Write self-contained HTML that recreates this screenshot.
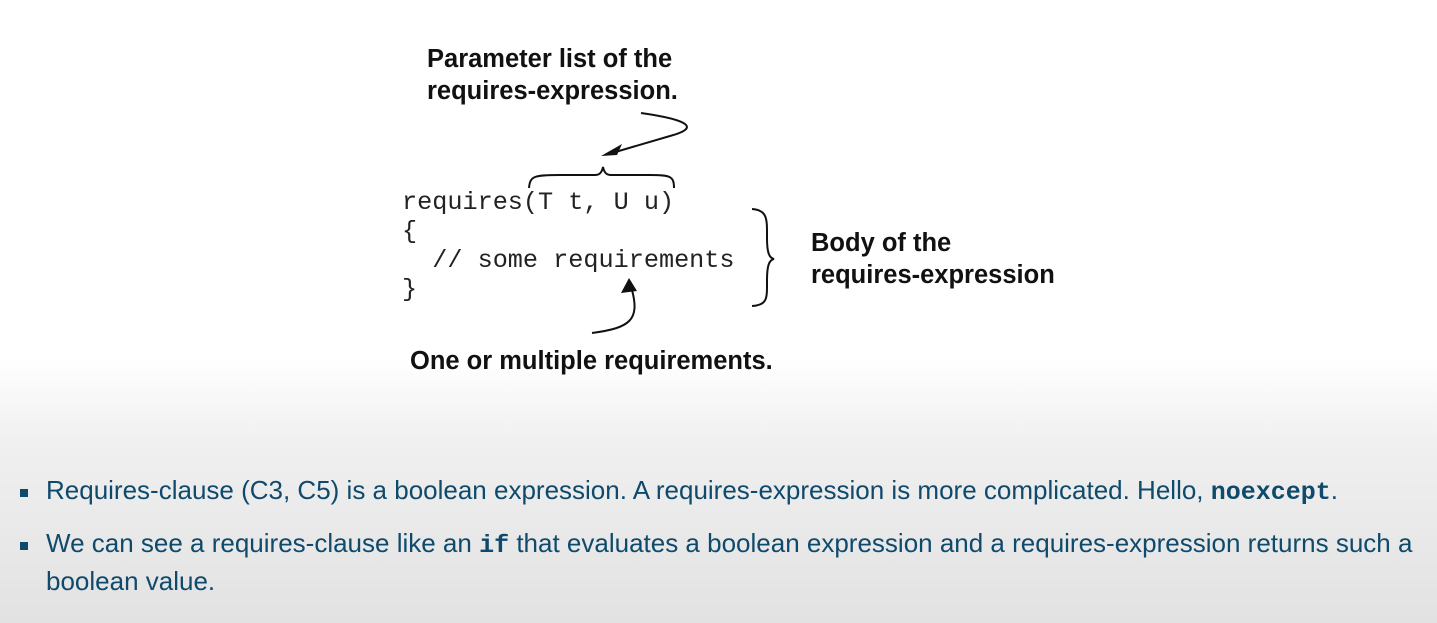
<!DOCTYPE html>
<html><head><meta charset="utf-8"><style>
html,body{margin:0;padding:0}
body{width:1437px;height:623px;position:relative;overflow:hidden;
background:linear-gradient(to bottom,#fff 0,#fff 360px,#f0f0f0 440px,#e2e2e2 623px);font-family:"Liberation Sans",sans-serif}
.a{position:absolute;white-space:nowrap}
.lbl{font-weight:bold;font-size:25.5px;color:#111;line-height:32px}
.code{font-family:"Liberation Mono",monospace;font-size:25.2px;color:#222;line-height:29px}
.b{font-size:26px;color:#0f4a6c;line-height:38px}
.b code{font-family:"Liberation Mono",monospace;font-weight:bold;font-size:25px}
.sq{position:absolute;width:8px;height:8px;background:#0f4a6c}
</style></head><body>
<div class="a lbl" style="left:427px;top:43px">Parameter list of the<br>requires-expression.</div>
<div class="a code" style="left:402px;top:188px">requires(T t, U u)<br>{<br>&nbsp;&nbsp;// some requirements<br>}</div>
<div class="a lbl" style="left:811px;top:227px">Body of the<br>requires-expression</div>
<div class="a lbl" style="left:410px;top:345px">One or multiple requirements.</div>
<svg class="a" style="left:0;top:0" width="1437" height="400">
<g fill="none" stroke="#111" stroke-width="2">
<path d="M641 113 C690 120 700 128 670 136 L612 153"/>
<path d="M529 188 C530 176 534 175 560 175 L595 175 C600 175 602 172 603 167 C604 172 606 175 611 175 L650 175 C670 175 674 176 674 188"/>
<path d="M752 209 C768 210 767 220 767 238 C767 252 769 258 774 259 C769 260 767 266 767 280 C767 298 768 305 752 306"/>
<path d="M592 333 C630 328 640 320 632 290"/>
</g>
<path d="M601 156 L622 144 L617 155 Z" fill="#111"/>
<path d="M629 278 L621 293 L637 291 Z" fill="#111"/>
</svg>
<div class="sq" style="left:20px;top:489px"></div>
<div class="sq" style="left:20px;top:542px"></div>
<div class="a b" style="left:46px;top:471px">Requires-clause (C3, C5) is a boolean expression. A requires-expression is more complicated. Hello, <code>noexcept</code>.</div>
<div class="a b" style="left:46px;top:524px">We can see a requires-clause like an <code>if</code> that evaluates a boolean expression and a requires-expression returns such a</div>
<div class="a b" style="left:46px;top:562px">boolean value.</div>
</body></html>
